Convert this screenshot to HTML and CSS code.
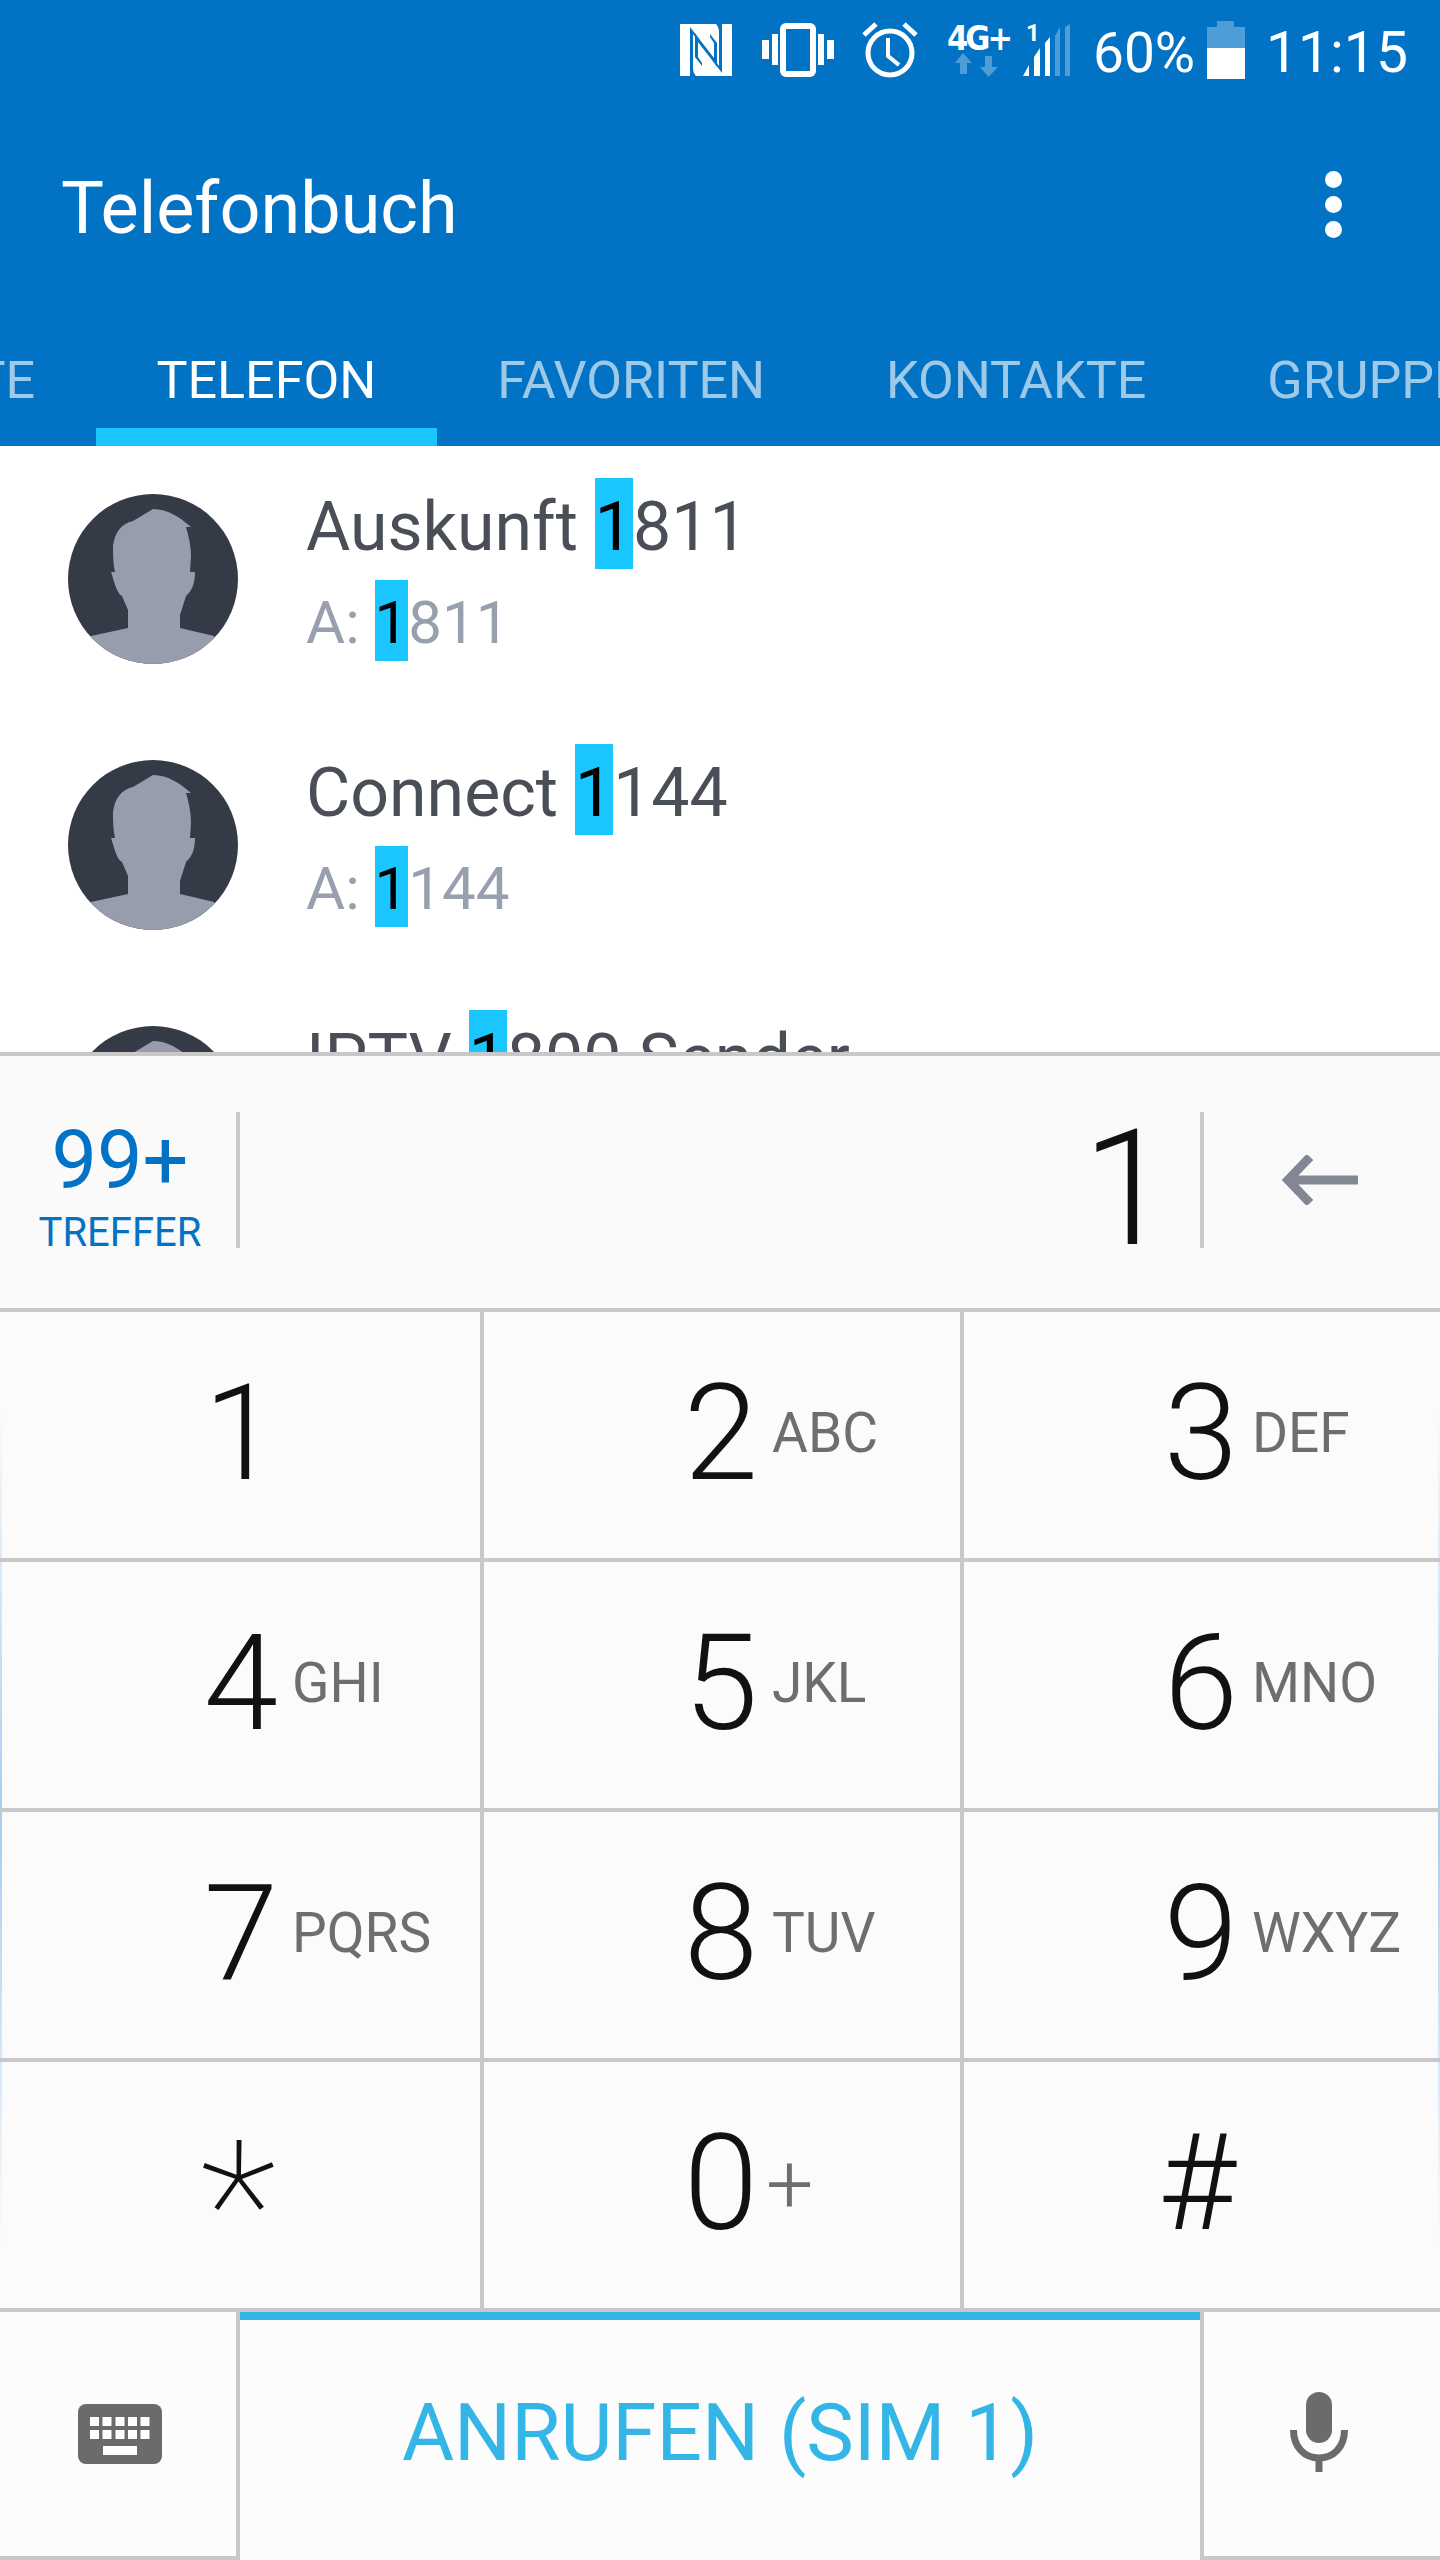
FILE: index.html
```html
<!DOCTYPE html>
<html lang="de">

<head>
    <meta charset="UTF-8">
    <title>Telefonbuch</title>
    <link rel="stylesheet" href="styles.css">
</head>

<body>

    <!-- Header -->
    <header class="app-header">
        <div class="status-bar">
            <svg class="icon-nfc" width="52" height="52" viewBox="0 0 52 52">
                <path fill="#fff" d="M0 0h52v52H0z"/>
                <path fill="#0273c4" d="M10 3l0 49h6c-2-2-3-5-3-8V10l24 33V19l-7-9v3l4 6v15L10 3zM42 49V0h-6c2 2 3 5 3 8v34L15 9v24l7 9v-3l-4-6V18l24 31z"/>
            </svg>
            <svg class="icon-vibrate" width="72" height="54" viewBox="0 0 72 54">
                <rect x="21" y="3" width="30" height="48" rx="3" fill="none" stroke="#fff" stroke-width="6"/>
                <path fill="#fff" d="M0 17h7v19H0zM10 11h6v31h-6zM56 11h6v31h-6zM65 17h7v19h-7z" />
            </svg>
            <svg class="icon-alarm" width="56" height="56" viewBox="0 0 56 56">
                <circle cx="28" cy="31" r="22" fill="none" stroke="#fff" stroke-width="5"/>
                <path fill="none" stroke="#fff" stroke-width="4" d="M26 16v18l11 9"/>
                <path fill="none" stroke="#fff" stroke-width="5" d="M14 2L2 13M42 2l12 11"/>
            </svg>
            <div class="net-type">
                <span class="net-label">4G+</span>
                <svg width="44" height="24" viewBox="0 0 44 24">
                    <path fill="#fff" fill-opacity=".3" d="M8 0l9 10h-5v11H5V10H0z"/>
                    <path fill="#fff" fill-opacity=".3" d="M30 3h7v11h6l-9.500 10L25 14h5z"/>
                </svg>
            </div>
            <div class="signal">
                <span class="sim-no">1</span>
                <svg width="47" height="52" viewBox="0 0 47 52">
                    <path fill="#fff" d="M0 52L6 41v11zM11 52V33l6-9v28zM22 52V19l5-6v39z"/>
                    <path fill="#fff" fill-opacity=".3" d="M32 52V12l5-9v49zM42 52V3l5-3v52z"/>
                </svg>
            </div>
            <span class="battery-text">60%</span>
            <div class="battery"><div class="battery-fill"></div></div>
            <span class="clock">11:15</span>
        </div>
        <div class="toolbar">
            <h1>Telefonbuch</h1>
            <div class="menu-dots"><i></i><i></i><i></i></div>
        </div>
        <nav class="tabs">
            <div class="tab tab-cut">LETZTE</div>
            <div class="tab active">TELEFON</div>
            <div class="tab">FAVORITEN</div>
            <div class="tab">KONTAKTE</div>
            <div class="tab">GRUPPEN</div>
        </nav>
    </header>

    <!-- Results -->
    <section class="results">
        <div class="contact">
            <svg class="avatar" width="170" height="170" viewBox="0 0 170 170"><use href="#person"/></svg>
            <div class="contact-text">
                <div class="contact-name">Auskunft <span class="hit">1</span>811</div>
                <div class="contact-number">A: <span class="hit">1</span>811</div>
            </div>
        </div>
        <div class="contact">
            <svg class="avatar" width="170" height="170" viewBox="0 0 170 170"><use href="#person"/></svg>
            <div class="contact-text">
                <div class="contact-name">Connect <span class="hit">1</span>144</div>
                <div class="contact-number">A: <span class="hit">1</span>144</div>
            </div>
        </div>
        <div class="contact">
            <svg class="avatar" width="170" height="170" viewBox="0 0 170 170"><use href="#person"/></svg>
            <div class="contact-text">
                <div class="contact-name">IPTV <span class="hit">1</span>800 Sender</div>
                <div class="contact-number">A: <span class="hit">1</span>800</div>
            </div>
        </div>
    </section>

    <!-- Number Display -->
    <section class="display">
        <div class="matches">
            <div class="matches-count">99+</div>
            <div class="matches-label">TREFFER</div>
        </div>
        <div class="typed">1</div>
        <div class="backspace">
            <svg width="76" height="50" viewBox="0 0 76 50">
                <path fill="none" stroke="#838793" stroke-width="9" d="M76 25H8M28 2L6 25l0 0L28 48" />
            </svg>
        </div>
    </section>

    <!-- Keypad -->
    <section class="keypad">
        <div class="key"><span class="digit">1</span></div>
        <div class="key"><span class="digit">2</span><span class="letters">ABC</span></div>
        <div class="key"><span class="digit">3</span><span class="letters">DEF</span></div>
        <div class="key"><span class="digit">4</span><span class="letters">GHI</span></div>
        <div class="key"><span class="digit">5</span><span class="letters">JKL</span></div>
        <div class="key"><span class="digit">6</span><span class="letters">MNO</span></div>
        <div class="key"><span class="digit">7</span><span class="letters">PQRS</span></div>
        <div class="key"><span class="digit">8</span><span class="letters">TUV</span></div>
        <div class="key"><span class="digit">9</span><span class="letters">WXYZ</span></div>
        <div class="key key-star"><span class="star">*</span></div>
        <div class="key"><span class="digit">0</span><span class="letters plus">+</span></div>
        <div class="key key-hash"><span class="digit">#</span></div>
    </section>

    <!-- Call Bar -->
    <section class="call-bar">
        <div class="side-btn side-left">
            <svg width="84" height="60" viewBox="0 0 84 60">
                <rect width="84" height="60" rx="8" fill="#6b6b6b"/>
                <path fill="#fff" d="M12 13h9v9h-9zM24.500 13h9v9h-9zM37.500 13h9v9h-9zM50 13h9v9h-9zM62.500 13h9v9h-9zM12 26h9v9h-9zM24.500 26h9v9h-9zM37.500 26h9v9h-9zM50 26h9v9h-9zM62.500 26h9v9h-9zM25 42h34v9H25z"/>
            </svg>
        </div>
        <div class="call-btn">ANRUFEN (SIM 1)</div>
        <div class="side-btn side-right">
            <svg class="icon-mic" width="58" height="80" viewBox="0 0 58 80">
                <rect x="16" y="0" width="26" height="51" rx="13" fill="#6b6b6b"/>
                <path fill="none" stroke="#6b6b6b" stroke-width="7" d="M3.500 38c0 17 11 28 25.500 28s25.500-11 25.500-28M29 64v16"/>
            </svg>
        </div>
    </section>

    <!-- Shared avatar drawing -->
    <svg width="0" height="0" class="defs">
        <defs>
            <clipPath id="circleClip"><circle cx="85" cy="85" r="85"/></clipPath>
            <g id="person">
                <circle cx="85" cy="85" r="85" fill="#343a46"/>
                <path clip-path="url(#circleClip)" fill="#989dad" d="M85 15c15 0 28 9 38 18h-5c3 10 5 20 5 30l-1 15 5 0c0 9-2 18-9 24l-6 19v13l34 8v28H23v-28l37-8v-18l-6-14c-5-2-8-15-11-24l4 0c-2-8-2-18-2-26 2-14 8-22 20-25z"/>
            </g>
        </defs>
    </svg>

</body>

</html>
```
FILE: styles.css
```css
/* Basic Reset */
* {
    margin: 0;
    padding: 0;
    box-sizing: border-box;
}

/* Body */
body {
    width: 1440px;
    height: 2560px;
    overflow: hidden;
    background: #fff;
    font-family: 'Roboto', sans-serif;
}

.defs {
    position: absolute;
}

/* Header */
.app-header {
    height: 446px;
    background: #0273c4;
    color: #fff;
}

/* Status Bar */
.status-bar {
    height: 100px;
    display: flex;
    justify-content: flex-end;
    align-items: center;
    padding-right: 35px;
}

.icon-nfc {
    margin-right: 30px;
}

.icon-vibrate {
    margin-right: 28px;
}

.icon-alarm {
    margin-right: 29px;
}

.net-type {
    width: 60px;
    margin-right: 16px;
}

.net-label {
    display: block;
    height: 30px;
    font-family: 'DejaVu Sans Condensed', 'DejaVu Sans', sans-serif;
    font-size: 34px;
    font-weight: 700;
    line-height: 30px;
    letter-spacing: -3px;
    white-space: nowrap;
}

.net-type svg {
    display: block;
    margin-left: 8px;
}

.signal {
    width: 47px;
    height: 52px;
    margin-right: 23px;
    position: relative;
}

.signal svg {
    display: block;
}

.sim-no {
    position: absolute;
    left: 3px;
    top: -3px;
    font-size: 24px;
    line-height: 24px;
    font-weight: 700;
}

.battery-text {
    font-size: 55px;
    line-height: 60px;
    width: 102px;
    margin-right: 12px;
    margin-top: 6px;
}

.battery {
    width: 38px;
    height: 52px;
    margin-right: 21px;
    margin-top: 6px;
    background: rgba(255, 255, 255, 0.3);
    position: relative;
}

.battery::before {
    content: "";
    position: absolute;
    left: 10px;
    top: -6px;
    width: 17px;
    height: 6px;
    background: rgba(255, 255, 255, 0.3);
}

.battery-fill {
    position: absolute;
    left: 0;
    right: 0;
    bottom: 0;
    height: 31px;
    background: #fff;
}

.clock {
    font-size: 57px;
    line-height: 60px;
    width: 139px;
    margin-top: 6px;
}

/* Toolbar */
.toolbar {
    height: 210px;
    display: flex;
    justify-content: space-between;
    padding: 0 98px 0 61px;
}

.toolbar h1 {
    margin-top: 56px;
    font-size: 72px;
    font-weight: 400;
    line-height: 106px;
    height: 106px;
}

.menu-dots {
    display: flex;
    flex-direction: column;
    gap: 8px;
    padding-top: 71px;
}

.menu-dots i {
    display: block;
    width: 17px;
    height: 17px;
    border-radius: 50%;
    background: #fff;
}

/* Tabs */
.tabs {
    height: 136px;
    display: flex;
    overflow: hidden;
}

.tab {
    flex: none;
    height: 136px;
    padding: 0 60.500px;
    font-size: 52px;
    line-height: 142px;
    color: rgba(255, 255, 255, 0.62);
}

.tab-cut {
    width: 96px;
    padding-left: 0;
    padding-right: 61px;
    display: flex;
    justify-content: flex-end;
}

.tab.active {
    color: #fff;
    border-bottom: 18px solid #1ac6ff;
}

/* Results */
.results {
    height: 606px;
    overflow: hidden;
}

.contact {
    height: 266px;
    display: flex;
    padding: 32px 0 0 68px;
}

.avatar {
    flex: none;
    margin-top: 16px;
    margin-right: 68px;
}

.contact-name {
    height: 91px;
    margin-bottom: 11px;
    font-size: 68px;
    line-height: 99px;
    color: #4a4f57;
    white-space: nowrap;
}

.contact-number {
    height: 81px;
    font-size: 60px;
    line-height: 85px;
    color: #98a0b0;
    white-space: nowrap;
}

.hit {
    display: inline-block;
    background: #1ac6ff;
    color: #000;
}

.contact-name .hit {
    height: 91px;
}

.contact-number .hit {
    height: 81px;
}

/* Number Display */
.display {
    height: 260px;
    background: #fafafa;
    border-top: 4px solid #c8c8c8;
    border-bottom: 4px solid #c8c8c8;
    padding-bottom: 4px;
    display: flex;
    align-items: center;
}

.matches {
    width: 240px;
    height: 136px;
    border-right: 4px solid #c8c8c8;
    padding-left: 4px;
    text-align: center;
    color: #0273c4;
}

.matches-count {
    font-size: 81px;
    line-height: 98px;
}

.matches-label {
    font-size: 40px;
    line-height: 46px;
}

.typed {
    flex: 1;
    height: 136px;
    padding-right: 28px;
    text-align: right;
    font-size: 162px;
    font-weight: 300;
    line-height: 154px;
    color: #111;
}

.backspace {
    width: 240px;
    height: 136px;
    border-left: 4px solid #c8c8c8;
    padding-right: 4px;
    display: flex;
    align-items: center;
    justify-content: center;
}

/* Keypad */
.keypad {
    display: grid;
    grid-template-columns: 484px 480px 476px;
    grid-auto-rows: 250px;
    background:
        linear-gradient(to bottom, transparent 98px, #a5cdf2 508px, transparent 931px) left top / 2px 100% no-repeat,
        linear-gradient(to bottom, transparent 98px, #a5cdf2 508px, transparent 931px) right top / 2px 100% no-repeat,
        #fbfbfb;
}

.key {
    display: grid;
    grid-template-columns: 278px 1fr;
    align-items: center;
    height: 250px;
    border-right: 4px solid #c8c8c8;
    border-bottom: 4px solid #c8c8c8;
}

.key:nth-child(3n) {
    border-right: none;
    grid-template-columns: 274px 1fr;
}

.key:nth-child(3n+2) {
    grid-template-columns: 274px 1fr;
}

.digit {
    font-size: 134px;
    font-weight: 300;
    line-height: 140px;
    color: #111;
    text-align: right;
    margin-top: -3px;
}

.letters {
    font-size: 55px;
    color: #6e6e6e;
    margin-left: 14px;
    margin-top: -4px;
}

.plus {
    font-size: 84px;
    font-weight: 300;
    line-height: 84px;
    margin-left: 8px;
    margin-top: 0;
}

.star {
    grid-column: 1 / 3;
    margin-top: 44px;
    font-size: 180px;
    font-weight: 100;
    line-height: 190px;
    color: #111;
    text-align: center;
    padding-right: 4px;
}

.key-hash .digit {
    grid-column: 1 / 3;
    padding-right: 10px;
    text-align: center;
}

/* Call Bar */
.call-bar {
    height: 248px;
    display: flex;
    background: #fcfcfc;
}

.side-btn {
    display: flex;
    align-items: center;
    justify-content: center;
    border-bottom: 4px solid #c8c8c8;
}

.side-left {
    width: 240px;
    border-right: 4px solid #c8c8c8;
    padding-left: 3px;
}

.side-right {
    width: 240px;
    border-left: 4px solid #c8c8c8;
    padding-right: 6px;
}

.icon-mic {
    margin-bottom: 4px;
}

.call-btn {
    flex: 1;
    border-top: 8px solid #33b5e5;
    text-align: center;
    font-size: 80px;
    line-height: 227px;
    color: #33b5e5;
}
```
